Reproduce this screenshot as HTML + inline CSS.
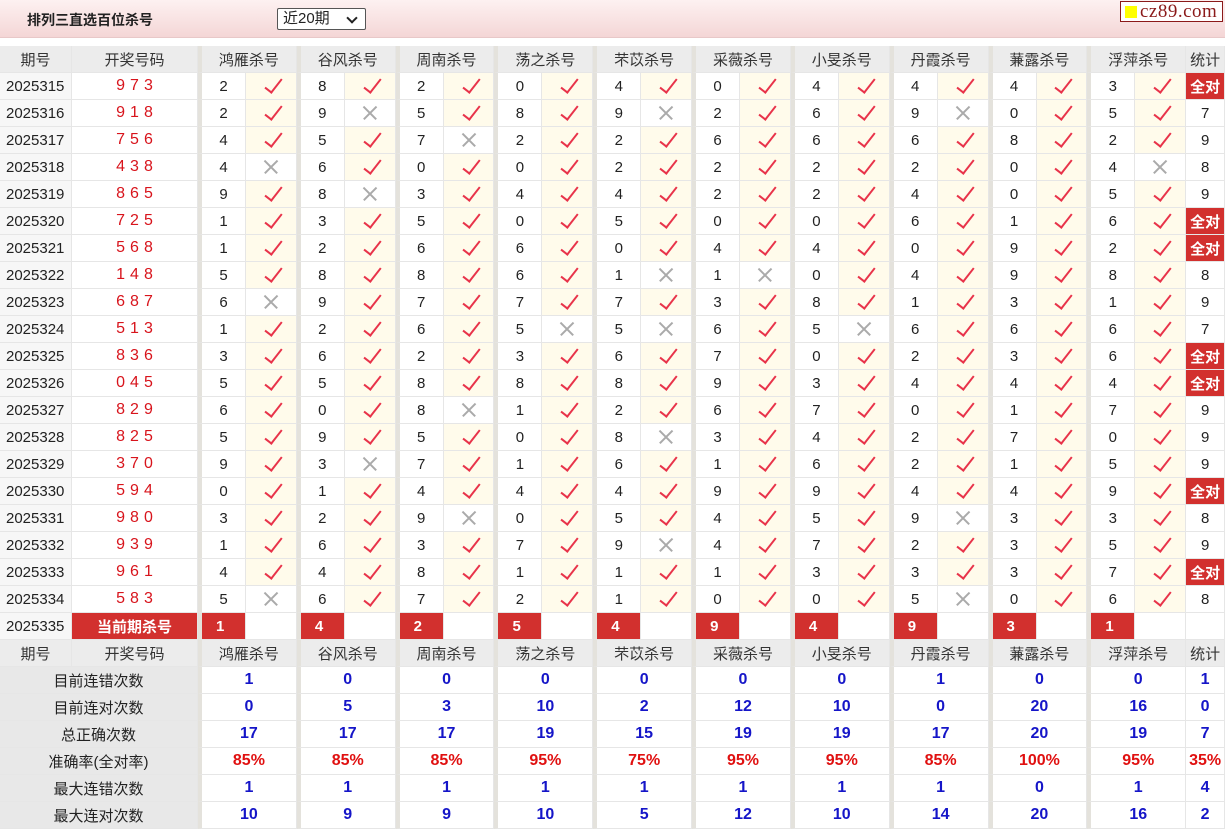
<!DOCTYPE html>
<html><head><meta charset="utf-8">
<style>
*{box-sizing:border-box;margin:0;padding:0}
body{width:1225px;height:829px;overflow:hidden;background:#fff;font-family:"Liberation Sans","Noto Sans CJK SC",sans-serif;font-size:15px;color:#222;position:relative}
.top{position:absolute;left:0;top:0;width:1225px;height:38px;background:linear-gradient(#fdf1f1,#f4d6d6);border-bottom:1px solid #e8c8c8}
.title{position:absolute;left:27px;top:10px;font-weight:bold;font-size:14px;color:#222}
.sel{position:absolute;left:277px;top:8px;width:89px;height:22px;border:1px solid #555;background:#fff;font-size:15px;padding-left:5px;line-height:20px;border-radius:2px}
.sel:after{content:"";position:absolute;right:9px;top:5px;width:6px;height:6px;border-right:2px solid #222;border-bottom:2px solid #222;transform:rotate(45deg)}
.logo{position:absolute;left:1120px;top:1px;width:103px;height:21px;border:1px solid #8b1a1a;background:#fff;font-family:"Liberation Serif",serif;font-size:19px;color:#8b1a1a;line-height:19px;padding-left:19px;letter-spacing:0.5px}
.logo:before{content:"";position:absolute;left:4px;top:4px;width:12px;height:12px;background:#ff0}
table{position:absolute;left:0;top:46px;border-collapse:separate;border-spacing:0;table-layout:fixed;width:1225px}
td{height:27px;border-right:1px solid #e6e6e6;border-bottom:1px solid #e6e6e6;text-align:center;vertical-align:middle;white-space:nowrap;padding:0}
.h td{background:#ececec;color:#333}
.p{background:#f7f7f7;text-align:left;padding-left:6px}
.d{color:#d8141c;letter-spacing:5px;font-size:16px;padding-left:5px}
.n{border-left:4px solid #e4e2dc}
.c,.x{position:relative}
.c{background:#fffbeb}
.c:after{content:"";position:absolute;left:50%;top:50%;width:7px;height:16px;margin:-11px 0 0 -2px;border-right:2.2px solid #e8334a;border-bottom:2.2px solid #e8334a;transform:rotate(38deg)}
.x:before,.x:after{content:"";position:absolute;left:50%;top:50%;width:18px;height:1.5px;margin:-1px 0 0 -9px;background:#aaa;transform:rotate(45deg)}
.x:after{transform:rotate(-45deg)}
.q{background:#d2302e;color:#fff;font-weight:bold}
.cur td.n{background:#d2302e;color:#fff;font-weight:bold;text-align:left;padding-left:14px}
.cur td.e{background:#fff}
.lb{background:#e8e8e8;color:#222}
.b{color:#1515c8;font-weight:bold;font-size:16px}
.r{color:#e01010;font-weight:bold;font-size:16px}
</style></head><body>
<div class="top"><div class="title">排列三直选百位杀号</div><div class="sel">近20期</div><div class="logo">cz89.com</div></div>
<table>
<colgroup><col style="width:72px"><col style="width:126px">
<col style="width:48px"><col style="width:50.8px"><col style="width:48px"><col style="width:50.8px"><col style="width:48px"><col style="width:50.8px"><col style="width:48px"><col style="width:50.8px"><col style="width:48px"><col style="width:50.8px"><col style="width:48px"><col style="width:50.8px"><col style="width:48px"><col style="width:50.8px"><col style="width:48px"><col style="width:50.8px"><col style="width:48px"><col style="width:50.8px"><col style="width:48px"><col style="width:50.8px"><col style="width:39px"></colgroup>
<tr class="h"><td>期号</td><td>开奖号码</td><td class="n" colspan="2">鸿雁杀号</td><td class="n" colspan="2">谷风杀号</td><td class="n" colspan="2">周南杀号</td><td class="n" colspan="2">荡之杀号</td><td class="n" colspan="2">芣苡杀号</td><td class="n" colspan="2">采薇杀号</td><td class="n" colspan="2">小旻杀号</td><td class="n" colspan="2">丹霞杀号</td><td class="n" colspan="2">蒹露杀号</td><td class="n" colspan="2">浮萍杀号</td><td>统计</td></tr>
<tr><td class="p">2025315</td><td class="d">973</td><td class="n">2</td><td class="c"></td><td class="n">8</td><td class="c"></td><td class="n">2</td><td class="c"></td><td class="n">0</td><td class="c"></td><td class="n">4</td><td class="c"></td><td class="n">0</td><td class="c"></td><td class="n">4</td><td class="c"></td><td class="n">4</td><td class="c"></td><td class="n">4</td><td class="c"></td><td class="n">3</td><td class="c"></td><td class="q">全对</td></tr>
<tr><td class="p">2025316</td><td class="d">918</td><td class="n">2</td><td class="c"></td><td class="n">9</td><td class="x"></td><td class="n">5</td><td class="c"></td><td class="n">8</td><td class="c"></td><td class="n">9</td><td class="x"></td><td class="n">2</td><td class="c"></td><td class="n">6</td><td class="c"></td><td class="n">9</td><td class="x"></td><td class="n">0</td><td class="c"></td><td class="n">5</td><td class="c"></td><td>7</td></tr>
<tr><td class="p">2025317</td><td class="d">756</td><td class="n">4</td><td class="c"></td><td class="n">5</td><td class="c"></td><td class="n">7</td><td class="x"></td><td class="n">2</td><td class="c"></td><td class="n">2</td><td class="c"></td><td class="n">6</td><td class="c"></td><td class="n">6</td><td class="c"></td><td class="n">6</td><td class="c"></td><td class="n">8</td><td class="c"></td><td class="n">2</td><td class="c"></td><td>9</td></tr>
<tr><td class="p">2025318</td><td class="d">438</td><td class="n">4</td><td class="x"></td><td class="n">6</td><td class="c"></td><td class="n">0</td><td class="c"></td><td class="n">0</td><td class="c"></td><td class="n">2</td><td class="c"></td><td class="n">2</td><td class="c"></td><td class="n">2</td><td class="c"></td><td class="n">2</td><td class="c"></td><td class="n">0</td><td class="c"></td><td class="n">4</td><td class="x"></td><td>8</td></tr>
<tr><td class="p">2025319</td><td class="d">865</td><td class="n">9</td><td class="c"></td><td class="n">8</td><td class="x"></td><td class="n">3</td><td class="c"></td><td class="n">4</td><td class="c"></td><td class="n">4</td><td class="c"></td><td class="n">2</td><td class="c"></td><td class="n">2</td><td class="c"></td><td class="n">4</td><td class="c"></td><td class="n">0</td><td class="c"></td><td class="n">5</td><td class="c"></td><td>9</td></tr>
<tr><td class="p">2025320</td><td class="d">725</td><td class="n">1</td><td class="c"></td><td class="n">3</td><td class="c"></td><td class="n">5</td><td class="c"></td><td class="n">0</td><td class="c"></td><td class="n">5</td><td class="c"></td><td class="n">0</td><td class="c"></td><td class="n">0</td><td class="c"></td><td class="n">6</td><td class="c"></td><td class="n">1</td><td class="c"></td><td class="n">6</td><td class="c"></td><td class="q">全对</td></tr>
<tr><td class="p">2025321</td><td class="d">568</td><td class="n">1</td><td class="c"></td><td class="n">2</td><td class="c"></td><td class="n">6</td><td class="c"></td><td class="n">6</td><td class="c"></td><td class="n">0</td><td class="c"></td><td class="n">4</td><td class="c"></td><td class="n">4</td><td class="c"></td><td class="n">0</td><td class="c"></td><td class="n">9</td><td class="c"></td><td class="n">2</td><td class="c"></td><td class="q">全对</td></tr>
<tr><td class="p">2025322</td><td class="d">148</td><td class="n">5</td><td class="c"></td><td class="n">8</td><td class="c"></td><td class="n">8</td><td class="c"></td><td class="n">6</td><td class="c"></td><td class="n">1</td><td class="x"></td><td class="n">1</td><td class="x"></td><td class="n">0</td><td class="c"></td><td class="n">4</td><td class="c"></td><td class="n">9</td><td class="c"></td><td class="n">8</td><td class="c"></td><td>8</td></tr>
<tr><td class="p">2025323</td><td class="d">687</td><td class="n">6</td><td class="x"></td><td class="n">9</td><td class="c"></td><td class="n">7</td><td class="c"></td><td class="n">7</td><td class="c"></td><td class="n">7</td><td class="c"></td><td class="n">3</td><td class="c"></td><td class="n">8</td><td class="c"></td><td class="n">1</td><td class="c"></td><td class="n">3</td><td class="c"></td><td class="n">1</td><td class="c"></td><td>9</td></tr>
<tr><td class="p">2025324</td><td class="d">513</td><td class="n">1</td><td class="c"></td><td class="n">2</td><td class="c"></td><td class="n">6</td><td class="c"></td><td class="n">5</td><td class="x"></td><td class="n">5</td><td class="x"></td><td class="n">6</td><td class="c"></td><td class="n">5</td><td class="x"></td><td class="n">6</td><td class="c"></td><td class="n">6</td><td class="c"></td><td class="n">6</td><td class="c"></td><td>7</td></tr>
<tr><td class="p">2025325</td><td class="d">836</td><td class="n">3</td><td class="c"></td><td class="n">6</td><td class="c"></td><td class="n">2</td><td class="c"></td><td class="n">3</td><td class="c"></td><td class="n">6</td><td class="c"></td><td class="n">7</td><td class="c"></td><td class="n">0</td><td class="c"></td><td class="n">2</td><td class="c"></td><td class="n">3</td><td class="c"></td><td class="n">6</td><td class="c"></td><td class="q">全对</td></tr>
<tr><td class="p">2025326</td><td class="d">045</td><td class="n">5</td><td class="c"></td><td class="n">5</td><td class="c"></td><td class="n">8</td><td class="c"></td><td class="n">8</td><td class="c"></td><td class="n">8</td><td class="c"></td><td class="n">9</td><td class="c"></td><td class="n">3</td><td class="c"></td><td class="n">4</td><td class="c"></td><td class="n">4</td><td class="c"></td><td class="n">4</td><td class="c"></td><td class="q">全对</td></tr>
<tr><td class="p">2025327</td><td class="d">829</td><td class="n">6</td><td class="c"></td><td class="n">0</td><td class="c"></td><td class="n">8</td><td class="x"></td><td class="n">1</td><td class="c"></td><td class="n">2</td><td class="c"></td><td class="n">6</td><td class="c"></td><td class="n">7</td><td class="c"></td><td class="n">0</td><td class="c"></td><td class="n">1</td><td class="c"></td><td class="n">7</td><td class="c"></td><td>9</td></tr>
<tr><td class="p">2025328</td><td class="d">825</td><td class="n">5</td><td class="c"></td><td class="n">9</td><td class="c"></td><td class="n">5</td><td class="c"></td><td class="n">0</td><td class="c"></td><td class="n">8</td><td class="x"></td><td class="n">3</td><td class="c"></td><td class="n">4</td><td class="c"></td><td class="n">2</td><td class="c"></td><td class="n">7</td><td class="c"></td><td class="n">0</td><td class="c"></td><td>9</td></tr>
<tr><td class="p">2025329</td><td class="d">370</td><td class="n">9</td><td class="c"></td><td class="n">3</td><td class="x"></td><td class="n">7</td><td class="c"></td><td class="n">1</td><td class="c"></td><td class="n">6</td><td class="c"></td><td class="n">1</td><td class="c"></td><td class="n">6</td><td class="c"></td><td class="n">2</td><td class="c"></td><td class="n">1</td><td class="c"></td><td class="n">5</td><td class="c"></td><td>9</td></tr>
<tr><td class="p">2025330</td><td class="d">594</td><td class="n">0</td><td class="c"></td><td class="n">1</td><td class="c"></td><td class="n">4</td><td class="c"></td><td class="n">4</td><td class="c"></td><td class="n">4</td><td class="c"></td><td class="n">9</td><td class="c"></td><td class="n">9</td><td class="c"></td><td class="n">4</td><td class="c"></td><td class="n">4</td><td class="c"></td><td class="n">9</td><td class="c"></td><td class="q">全对</td></tr>
<tr><td class="p">2025331</td><td class="d">980</td><td class="n">3</td><td class="c"></td><td class="n">2</td><td class="c"></td><td class="n">9</td><td class="x"></td><td class="n">0</td><td class="c"></td><td class="n">5</td><td class="c"></td><td class="n">4</td><td class="c"></td><td class="n">5</td><td class="c"></td><td class="n">9</td><td class="x"></td><td class="n">3</td><td class="c"></td><td class="n">3</td><td class="c"></td><td>8</td></tr>
<tr><td class="p">2025332</td><td class="d">939</td><td class="n">1</td><td class="c"></td><td class="n">6</td><td class="c"></td><td class="n">3</td><td class="c"></td><td class="n">7</td><td class="c"></td><td class="n">9</td><td class="x"></td><td class="n">4</td><td class="c"></td><td class="n">7</td><td class="c"></td><td class="n">2</td><td class="c"></td><td class="n">3</td><td class="c"></td><td class="n">5</td><td class="c"></td><td>9</td></tr>
<tr><td class="p">2025333</td><td class="d">961</td><td class="n">4</td><td class="c"></td><td class="n">4</td><td class="c"></td><td class="n">8</td><td class="c"></td><td class="n">1</td><td class="c"></td><td class="n">1</td><td class="c"></td><td class="n">1</td><td class="c"></td><td class="n">3</td><td class="c"></td><td class="n">3</td><td class="c"></td><td class="n">3</td><td class="c"></td><td class="n">7</td><td class="c"></td><td class="q">全对</td></tr>
<tr><td class="p">2025334</td><td class="d">583</td><td class="n">5</td><td class="x"></td><td class="n">6</td><td class="c"></td><td class="n">7</td><td class="c"></td><td class="n">2</td><td class="c"></td><td class="n">1</td><td class="c"></td><td class="n">0</td><td class="c"></td><td class="n">0</td><td class="c"></td><td class="n">5</td><td class="x"></td><td class="n">0</td><td class="c"></td><td class="n">6</td><td class="c"></td><td>8</td></tr>
<tr class="cur"><td class="p">2025335</td><td class="q">当前期杀号</td><td class="n">1</td><td class="e"></td><td class="n">4</td><td class="e"></td><td class="n">2</td><td class="e"></td><td class="n">5</td><td class="e"></td><td class="n">4</td><td class="e"></td><td class="n">9</td><td class="e"></td><td class="n">4</td><td class="e"></td><td class="n">9</td><td class="e"></td><td class="n">3</td><td class="e"></td><td class="n">1</td><td class="e"></td><td></td></tr>
<tr class="h"><td>期号</td><td>开奖号码</td><td class="n" colspan="2">鸿雁杀号</td><td class="n" colspan="2">谷风杀号</td><td class="n" colspan="2">周南杀号</td><td class="n" colspan="2">荡之杀号</td><td class="n" colspan="2">芣苡杀号</td><td class="n" colspan="2">采薇杀号</td><td class="n" colspan="2">小旻杀号</td><td class="n" colspan="2">丹霞杀号</td><td class="n" colspan="2">蒹露杀号</td><td class="n" colspan="2">浮萍杀号</td><td>统计</td></tr>
<tr><td class="lb" colspan="2">目前连错次数</td><td class="n b" colspan="2">1</td><td class="n b" colspan="2">0</td><td class="n b" colspan="2">0</td><td class="n b" colspan="2">0</td><td class="n b" colspan="2">0</td><td class="n b" colspan="2">0</td><td class="n b" colspan="2">0</td><td class="n b" colspan="2">1</td><td class="n b" colspan="2">0</td><td class="n b" colspan="2">0</td><td class="b">1</td></tr>
<tr><td class="lb" colspan="2">目前连对次数</td><td class="n b" colspan="2">0</td><td class="n b" colspan="2">5</td><td class="n b" colspan="2">3</td><td class="n b" colspan="2">10</td><td class="n b" colspan="2">2</td><td class="n b" colspan="2">12</td><td class="n b" colspan="2">10</td><td class="n b" colspan="2">0</td><td class="n b" colspan="2">20</td><td class="n b" colspan="2">16</td><td class="b">0</td></tr>
<tr><td class="lb" colspan="2">总正确次数</td><td class="n b" colspan="2">17</td><td class="n b" colspan="2">17</td><td class="n b" colspan="2">17</td><td class="n b" colspan="2">19</td><td class="n b" colspan="2">15</td><td class="n b" colspan="2">19</td><td class="n b" colspan="2">19</td><td class="n b" colspan="2">17</td><td class="n b" colspan="2">20</td><td class="n b" colspan="2">19</td><td class="b">7</td></tr>
<tr><td class="lb" colspan="2">准确率(全对率)</td><td class="n r" colspan="2">85%</td><td class="n r" colspan="2">85%</td><td class="n r" colspan="2">85%</td><td class="n r" colspan="2">95%</td><td class="n r" colspan="2">75%</td><td class="n r" colspan="2">95%</td><td class="n r" colspan="2">95%</td><td class="n r" colspan="2">85%</td><td class="n r" colspan="2">100%</td><td class="n r" colspan="2">95%</td><td class="r">35%</td></tr>
<tr><td class="lb" colspan="2">最大连错次数</td><td class="n b" colspan="2">1</td><td class="n b" colspan="2">1</td><td class="n b" colspan="2">1</td><td class="n b" colspan="2">1</td><td class="n b" colspan="2">1</td><td class="n b" colspan="2">1</td><td class="n b" colspan="2">1</td><td class="n b" colspan="2">1</td><td class="n b" colspan="2">0</td><td class="n b" colspan="2">1</td><td class="b">4</td></tr>
<tr><td class="lb" colspan="2">最大连对次数</td><td class="n b" colspan="2">10</td><td class="n b" colspan="2">9</td><td class="n b" colspan="2">9</td><td class="n b" colspan="2">10</td><td class="n b" colspan="2">5</td><td class="n b" colspan="2">12</td><td class="n b" colspan="2">10</td><td class="n b" colspan="2">14</td><td class="n b" colspan="2">20</td><td class="n b" colspan="2">16</td><td class="b">2</td></tr>
</table>
</body></html>
